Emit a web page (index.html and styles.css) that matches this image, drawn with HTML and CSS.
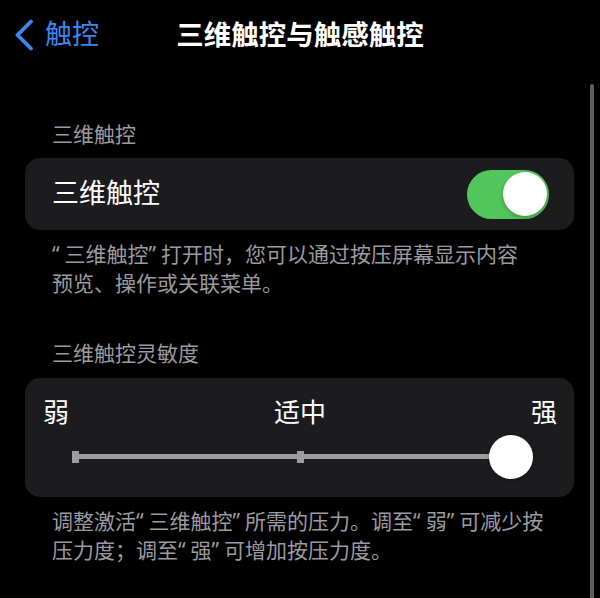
FILE: index.html
```html
<!DOCTYPE html>
<html lang="zh-CN">
<head>
<meta charset="utf-8">
<title>三维触控与触感触控</title>
<link rel="stylesheet" href="styles.css">
</head>
<body>
<div class="screen">
  <header class="nav">
    <a class="back" href="#">
      <svg class="chevron" width="20" height="32" viewBox="0 0 20 32" aria-hidden="true">
        <path d="M17 2.5 L3.5 16 L17 29.5" fill="none" stroke="currentColor" stroke-width="3.8" stroke-linecap="round" stroke-linejoin="round"/>
      </svg>
      <span class="back-label">触控</span>
    </a>
    <h1 class="title">三维触控与触感触控</h1>
    <span class="nav-spacer"></span>
  </header>

  <main class="content">
    <section class="group group-touch">
      <h2 class="group-header">三维触控</h2>
      <div class="card row">
        <span class="row-label">三维触控</span>
        <span class="switch is-on"><span class="switch-knob"></span></span>
      </div>
      <p class="group-footer"><span class="quote">“</span>三维触控<span class="quote">”</span>打开时，您可以通过按压屏幕显示内容<br>预览、操作或关联菜单。</p>
    </section>

    <section class="group group-sensitivity">
      <h2 class="group-header">三维触控灵敏度</h2>
      <div class="card slider-card">
        <div class="slider-labels">
          <span>弱</span>
          <span>适中</span>
          <span>强</span>
        </div>
        <div class="slider">
          <span class="slider-track"></span>
          <span class="slider-tick tick-start"></span>
          <span class="slider-tick tick-mid"></span>
          <span class="slider-knob"></span>
        </div>
      </div>
      <p class="group-footer">调整激活<span class="quote">“</span>三维触控<span class="quote">”</span>所需的压力。调至<span class="quote">“</span>弱<span class="quote">”</span>可减少按<br>压力度；调至<span class="quote">“</span>强<span class="quote">”</span>可增加按压力度。</p>
    </section>
  </main>

  <div class="scrollbar"></div>
</div>
</body>
</html>
```

FILE: styles.css
```css
* {
  box-sizing: border-box;
}

html, body {
  margin: 0;
  padding: 0;
  background: #000;
}

body {
  color: #fff;
  font-family: "Inter", "Noto Sans CJK SC", sans-serif;
}

.screen {
  position: relative;
  width: 600px;
  height: 598px;
  overflow: hidden;
  background: #000;
}

/* Navigation bar */
.nav {
  display: grid;
  grid-template-columns: 1fr auto 1fr;
  align-items: center;
  height: 70px;
}

.back {
  display: flex;
  align-items: center;
  gap: 11px;
  padding-left: 14px;
  color: #3d87f2;
  text-decoration: none;
}

.chevron {
  display: block;
  margin-top: -1px;
}

.back-label {
  font-size: 27px;
  line-height: 32px;
}

.title {
  margin: 0;
  font-size: 27.5px;
  line-height: 34px;
  font-weight: 600;
  color: #fff;
  text-align: center;
}

/* Content */
.content {
  padding: 0 26px 0 25px;
}

.group-header {
  margin: 0;
  padding-left: 27px;
  font-size: 21px;
  line-height: 28px;
  font-weight: 400;
  color: #9b9ba0;
}

.group-touch .group-header {
  margin-top: 51px;
}

.group-sensitivity .group-header {
  margin-top: 41.5px;
}

.card {
  background: #1c1c1e;
  border-radius: 15px;
}

.group-touch .card {
  margin-top: 9px;
}

.group-sensitivity .card {
  margin-top: 10px;
}

.row {
  display: flex;
  align-items: center;
  justify-content: space-between;
  height: 72px;
  padding: 0 25px 0 27px;
}

.row-label {
  font-size: 27px;
  line-height: 34px;
  color: #fff;
}

.switch {
  position: relative;
  width: 82px;
  height: 49px;
  border-radius: 25px;
  background: #3a3a3c;
}

.switch.is-on {
  background: #52c65a;
}

.switch-knob {
  position: absolute;
  top: 2.5px;
  right: 2.5px;
  width: 44px;
  height: 44px;
  border-radius: 50%;
  background: #fff;
  box-shadow: 0 2px 4px rgba(0, 0, 0, 0.25);
}

.group-footer {
  margin: 0;
  padding: 10px 0 0 27px;
  font-family: "Noto Sans", "Noto Sans CJK SC", sans-serif;
  font-size: 21px;
  line-height: 29px;
  color: #9b9ba0;
}

.quote {
  letter-spacing: 5px;
}

/* Slider */
.slider-card {
  padding: 20px 17px 18px 18px;
}

.slider-labels {
  display: flex;
  justify-content: space-between;
  font-size: 26px;
  line-height: 30px;
  color: #fff;
}

.slider {
  position: relative;
  height: 44px;
  margin: 7px 24px 0 29px;
}

.slider-track {
  position: absolute;
  left: 0;
  right: 22px;
  top: 19.5px;
  height: 5px;
  background: #9d9da1;
}

.slider-tick {
  position: absolute;
  top: 16px;
  width: 7px;
  height: 12px;
  background: #9d9da1;
}

.tick-start {
  left: 0;
}

.tick-mid {
  left: 225px;
}

.slider-knob {
  position: absolute;
  right: 0;
  top: 0;
  width: 44px;
  height: 44px;
  border-radius: 50%;
  background: #fff;
  box-shadow: 0 2px 5px rgba(0, 0, 0, 0.3);
}

/* Scroll indicator */
.scrollbar {
  position: absolute;
  top: 84px;
  bottom: -4px;
  right: 6px;
  width: 4px;
  border-radius: 2px;
  background: #5e5e61;
}
```
